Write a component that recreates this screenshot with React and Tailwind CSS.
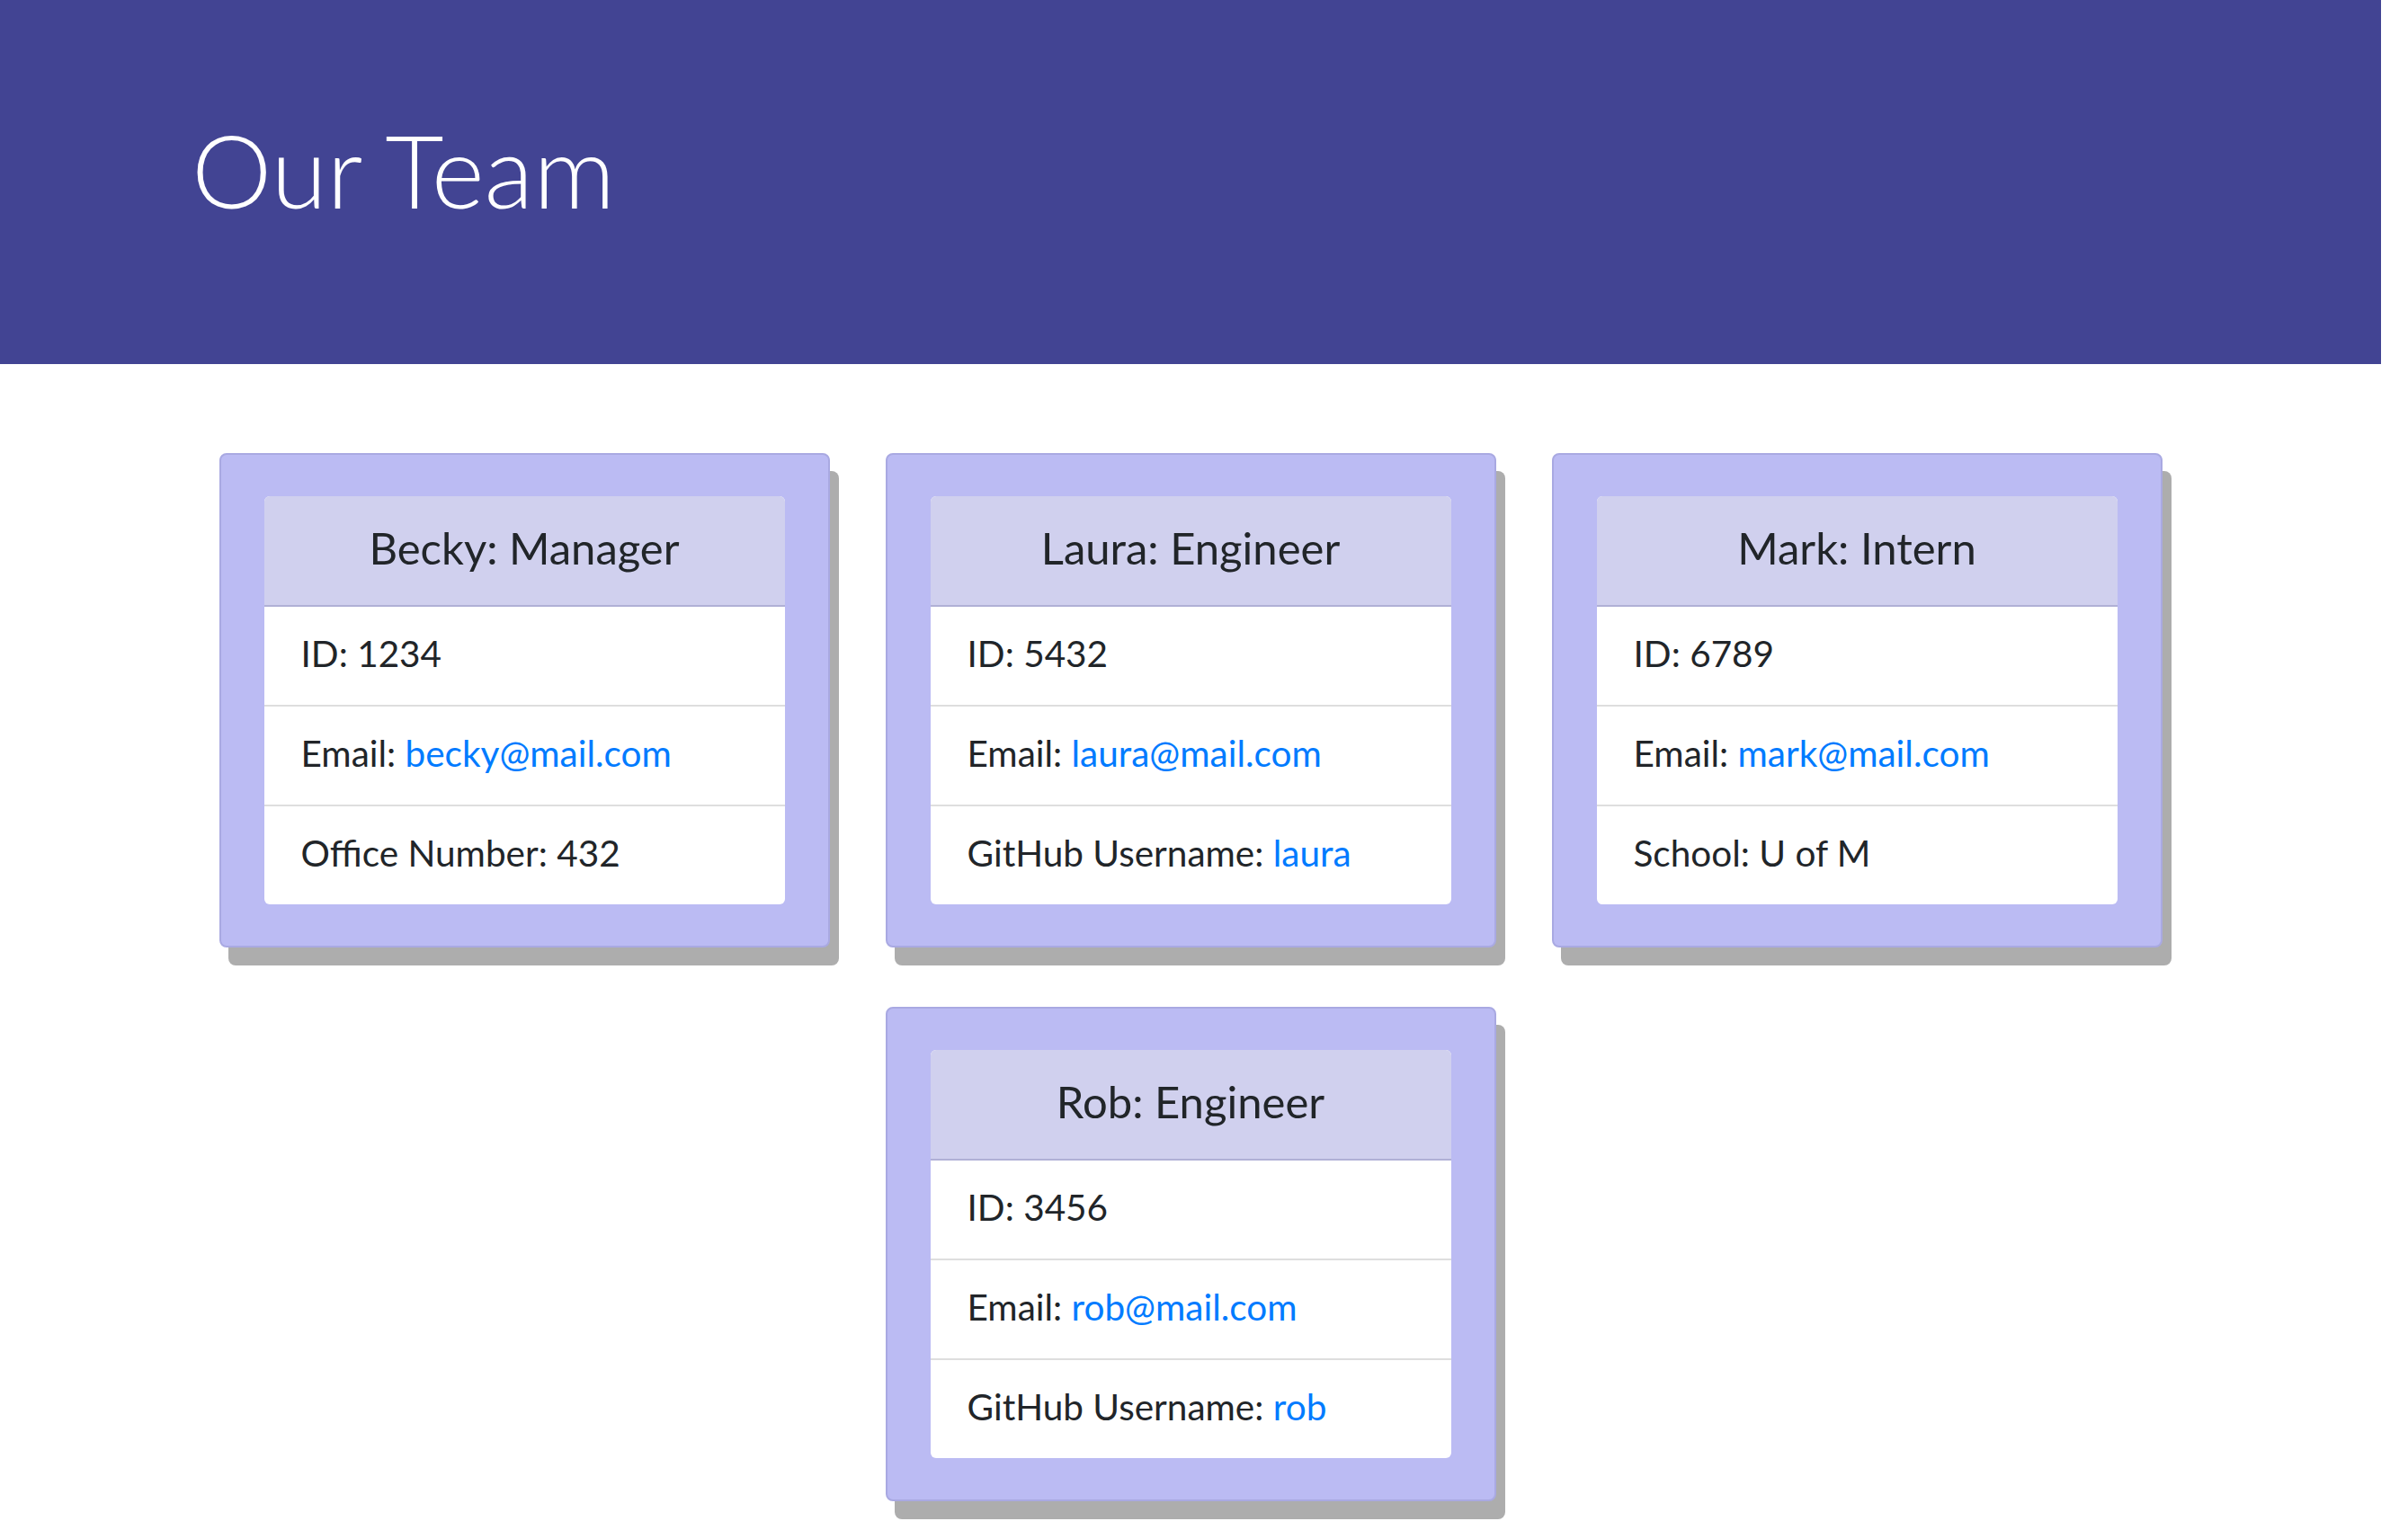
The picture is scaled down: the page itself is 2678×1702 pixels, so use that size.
const team = [
  { name: "Becky", role: "Manager", id: 1234, email: "becky@mail.com", extra: { label: "Office Number", value: "432" } },
  { name: "Laura", role: "Engineer", id: 5432, email: "laura@mail.com", extra: { label: "GitHub Username", value: "laura", link: true } },
  { name: "Mark", role: "Intern", id: 6789, email: "mark@mail.com", extra: { label: "School", value: "U of M" } },
  { name: "Rob", role: "Engineer", id: 3456, email: "rob@mail.com", extra: { label: "GitHub Username", value: "rob", link: true } },
]

const MemberCard = ({ member }) => (
  <div className="w-[679px] rounded-[8px] border-2 border-[#a9a9e2] bg-[#bbbbf3] px-[48px] py-[46px] shadow-[10px_20px_0_#adadad]">
    <div className="rounded-[6px] overflow-hidden bg-white">
      <div className="h-[123px] bg-[#d0d0ee] border-b-2 border-[#b0b0d6] pt-[28px] text-center text-[49px] leading-[1.2] text-[#212529]">
        {member.name}: {member.role}
      </div>
      <div className="px-[41px] pt-[28px] pb-[33px] text-[40.5px] leading-[48px] text-[#212529]">
        ID: {member.id}
      </div>
      <div className="border-t-2 border-[#dedede] px-[41px] pt-[28px] pb-[33px] text-[40.5px] leading-[48px] text-[#212529]">
        Email: <a href={`mailto:${member.email}`} className="text-[#007bff]">{member.email}</a>
      </div>
      <div className="border-t-2 border-[#dedede] px-[41px] pt-[28px] pb-[33px] text-[40.5px] leading-[48px] text-[#212529]">
        {member.extra.label}:{" "}
        {member.extra.link ? (
          <a href="#" className="text-[#007bff]">{member.extra.value}</a>
        ) : (
          member.extra.value
        )}
      </div>
    </div>
  </div>
)

export default function App() {
  return (
    <div className="w-[2648px] min-h-[1702px] bg-white font-['Lato',sans-serif]">
      <header className="h-[405px] bg-[#424493] pt-[121px] pl-[213px]">
        <h1 className="text-[113px] font-light leading-[1.2] text-white">Our Team</h1>
      </header>

      <main className="mx-auto w-[2162px] pt-[99px] pb-[40px] flex flex-wrap justify-center gap-x-[62px] gap-y-[66px]">
        {team.map((member) => (
          <MemberCard key={member.id} member={member} />
        ))}
      </main>
    </div>
  )
}
